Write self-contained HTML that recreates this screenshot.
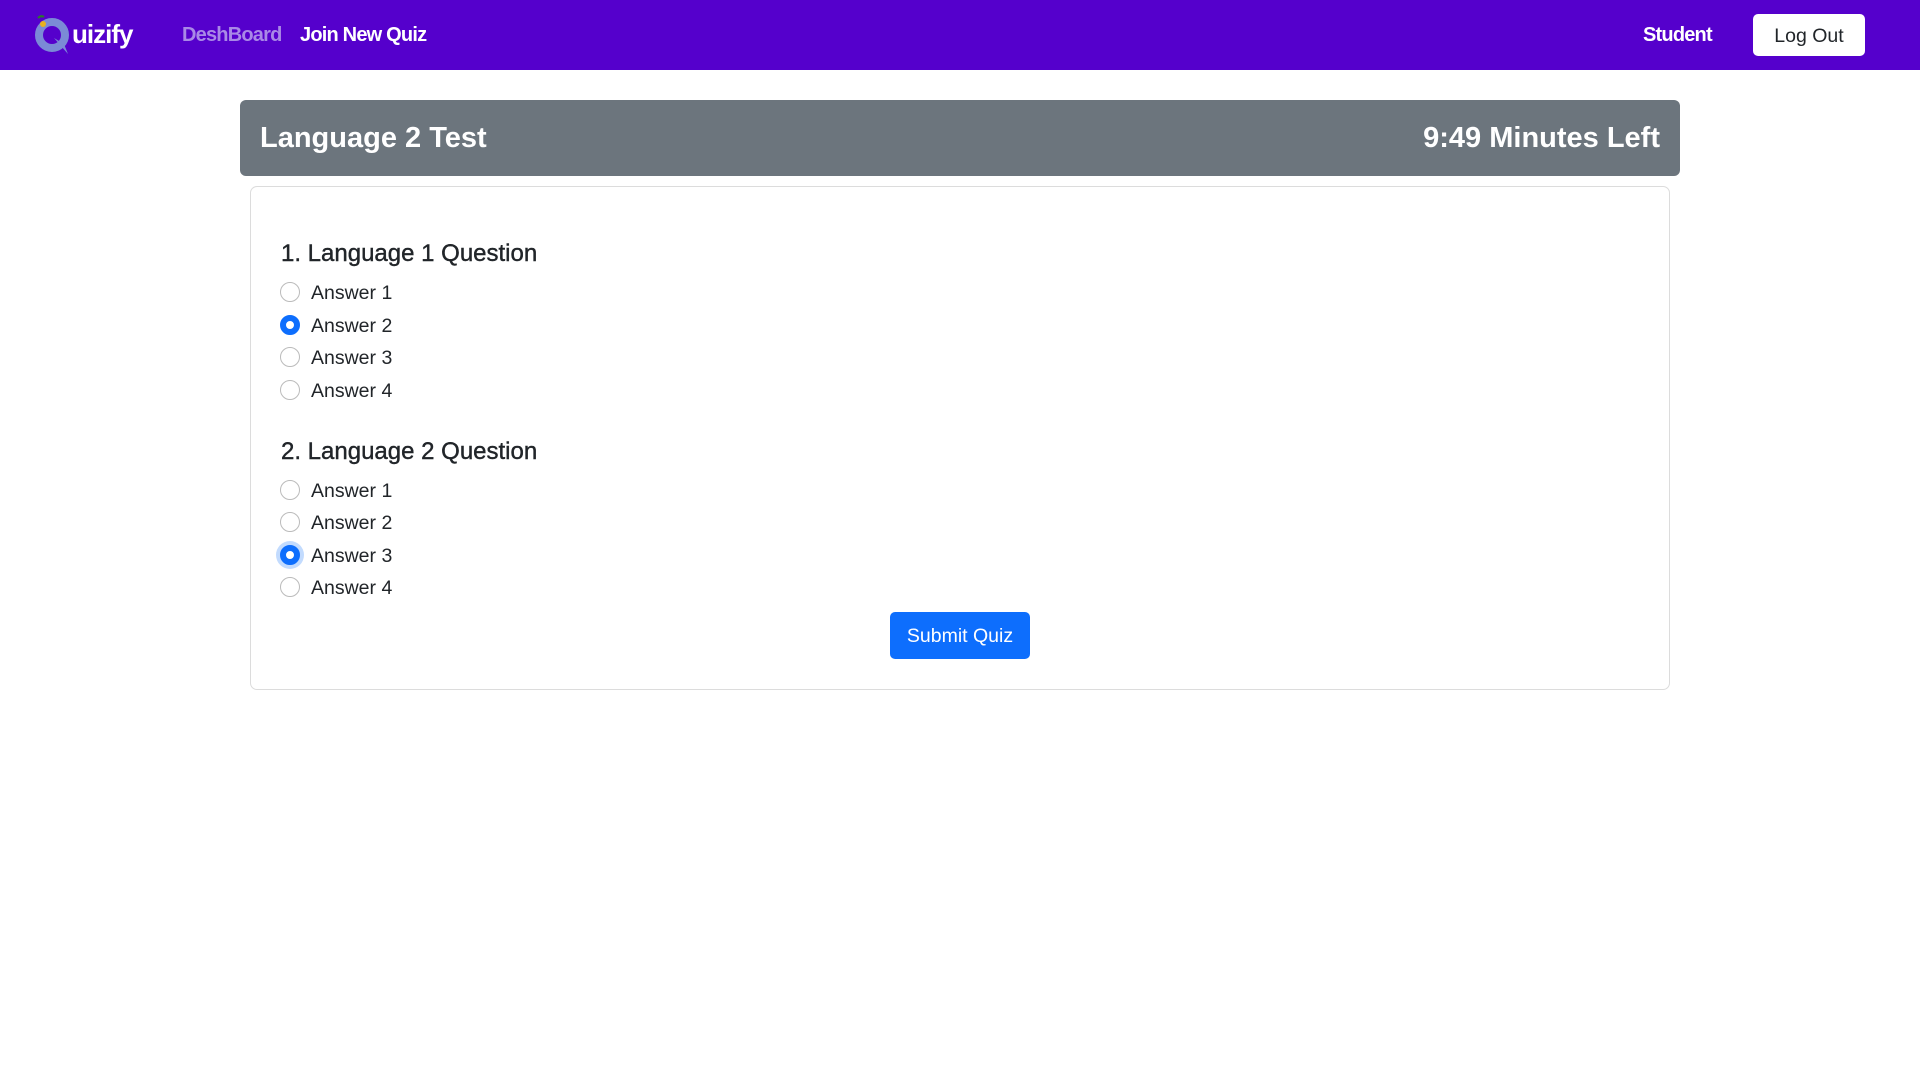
<!DOCTYPE html>
<html><head><meta charset="utf-8"><style>
*{box-sizing:border-box;margin:0;padding:0}
body{width:1920px;height:1080px;background:#fff;font-family:"Liberation Sans",sans-serif;color:#212529;position:relative;overflow:hidden}
.nav{position:absolute;left:0;top:0;width:1920px;height:70px;background:#5500cc}
.abs{position:absolute;white-space:nowrap}
.hdr{position:absolute;left:240px;top:100px;width:1440px;height:76px;background:#6c757d;border-radius:6px;color:#fff;font-size:29px;font-weight:bold}
.card{position:absolute;left:250px;top:186px;width:1420px;height:504px;border:1px solid #dcdcdc;border-radius:7px}
.q{position:absolute;left:281px;font-size:24px;font-weight:500;color:#212529;-webkit-text-stroke:0.4px #212529}
.a{position:absolute;left:280px;font-size:19.5px;height:22px;line-height:22px}
.r{display:inline-block;width:20px;height:20px;border:1px solid #bbb;border-radius:50%;vertical-align:middle;margin-right:11px;position:relative;top:-2px}
.r.on{border:6px solid #0d6efd;background:#fff}
.r.focus{box-shadow:0 0 0 4px rgba(13,110,253,.25)}
</style></head><body>
<div class="nav"></div>
<svg class="abs" style="left:34px;top:14px" width="40" height="42" viewBox="0 0 40 42">
<path d="M4 4 q3 -3 6 -1" stroke="#2a7a2a" stroke-width="2" fill="none"/>
<circle cx="18" cy="21" r="13" fill="none" stroke="#7b8ad6" stroke-width="8"/>
<path d="M20 24 L34 40 L30 30 Z" fill="#7b8ad6"/>
<circle cx="9" cy="10" r="3" fill="#e8b020"/>
</svg>
<div class="abs" style="left:72px;top:19px;font-size:26px;font-weight:bold;color:#fff;letter-spacing:-1px">uizify</div>
<div class="abs" style="left:182px;top:24px;font-size:20px;font-weight:bold;color:#a989e6;letter-spacing:-0.8px">DeshBoard</div>
<div class="abs" style="left:300px;top:24px;font-size:20px;font-weight:bold;color:#fff;letter-spacing:-0.8px">Join New Quiz</div>
<div class="abs" style="left:1643px;top:24px;font-size:20px;font-weight:bold;color:#fff;letter-spacing:-0.8px">Student</div>
<div class="abs" style="left:1753px;top:14px;width:112px;height:42px;background:#fff;border-radius:5px;font-size:19.5px;line-height:44px;text-align:center;color:#212529">Log Out</div>
<div class="hdr"><span class="abs" style="left:20px;top:22px">Language 2 Test</span><span class="abs" style="right:20px;top:22px">9:49 Minutes Left</span></div>
<div class="card"></div>
<div class="q" style="top:240px">1. Language 1 Question</div>
<div class="a" style="top:282px"><span class="r"></span>Answer 1</div>
<div class="a" style="top:315px"><span class="r on"></span>Answer 2</div>
<div class="a" style="top:347px"><span class="r"></span>Answer 3</div>
<div class="a" style="top:380px"><span class="r"></span>Answer 4</div>
<div class="q" style="top:438px">2. Language 2 Question</div>
<div class="a" style="top:480px"><span class="r"></span>Answer 1</div>
<div class="a" style="top:512px"><span class="r"></span>Answer 2</div>
<div class="a" style="top:545px"><span class="r on focus"></span>Answer 3</div>
<div class="a" style="top:577px"><span class="r"></span>Answer 4</div>
<div class="abs" style="left:890px;top:612px;width:140px;height:47px;background:#0d6efd;border-radius:5px;color:#fff;font-size:19.5px;line-height:49px;text-align:center">Submit Quiz</div>
</body></html>
